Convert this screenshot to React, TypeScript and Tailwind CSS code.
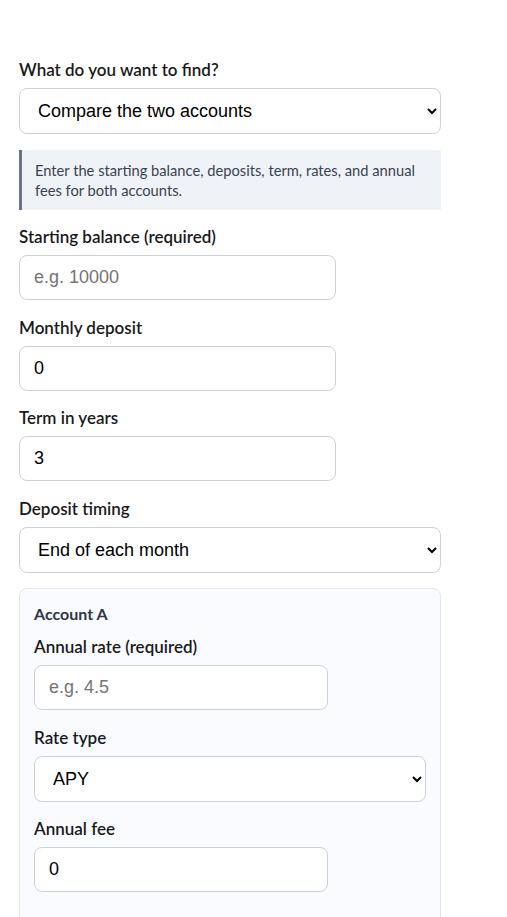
import React from "react";

const labelCls =
  "block text-[17px] leading-6 font-semibold text-[#1a1a1a] mb-1.5";
const inputCls =
  "block w-3/4 h-[45px] px-3.5 rounded-lg border border-[#cbd2da] bg-white text-[18px] text-black placeholder:text-[#757575] outline-none font-['Liberation_Sans',Arial,sans-serif]";
const selectCls =
  "block w-full h-[46px] px-3.5 rounded-lg border border-[#cbd2da] bg-white text-[18px] text-black outline-none font-['Liberation_Sans',Arial,sans-serif]";

function Field({
  label,
  children,
}: {
  label: string;
  children: React.ReactNode;
}) {
  return (
    <div>
      <label className={labelCls}>{label}</label>
      {children}
    </div>
  );
}

function AccountCard({ name }: { name: string }) {
  return (
    <div className="rounded-lg border border-[#e3e8ef] bg-[#f9fbfe] px-3.5 pt-[15px] pb-8 flex flex-col">
      <div className="text-[16px] leading-5 font-bold text-[#2d3748] mb-[11px]">
        {name}
      </div>
      <div className="flex flex-col gap-[15.5px]">
        <Field label="Annual rate (required)">
          <input className={inputCls} placeholder="e.g. 4.5" />
        </Field>
        <Field label="Rate type">
          <select className={selectCls} defaultValue="APY">
            <option value="APY">APY</option>
            <option value="APR">APR</option>
          </select>
        </Field>
        <Field label="Annual fee">
          <input className={inputCls} defaultValue="0" />
        </Field>
      </div>
    </div>
  );
}

export default function App() {
  return (
    <div className="min-h-screen bg-white pt-[58px] px-[19px] pb-10 font-['Lato','Noto_Sans',sans-serif]">
      <div className="w-[422px] flex flex-col">
        <Field label="What do you want to find?">
          <select className={selectCls} defaultValue="compare">
            <option value="compare">Compare the two accounts</option>
            <option value="a">Account A only</option>
          </select>
        </Field>

        <div className="mt-4 border-l-[3px] border-[#697386] bg-[#eff3f8] pl-[13px] pr-3 py-2.5 text-[14.7px] leading-5 text-[#3a4250]">
          Enter the starting balance, deposits, term, rates, and annual fees
          for both accounts.
        </div>

        <div className="mt-[15px] flex flex-col gap-[15.7px]">
          <Field label="Starting balance (required)">
            <input className={inputCls} placeholder="e.g. 10000" />
          </Field>
          <Field label="Monthly deposit">
            <input className={inputCls} defaultValue="0" />
          </Field>
          <Field label="Term in years">
            <input className={inputCls} defaultValue="3" />
          </Field>
          <Field label="Deposit timing">
            <select className={selectCls} defaultValue="end">
              <option value="end">End of each month</option>
              <option value="start">Start of each month</option>
            </select>
          </Field>
        </div>

        <div className="mt-[15px] flex flex-col gap-4">
          <AccountCard name="Account A" />
          <AccountCard name="Account B" />
        </div>
      </div>
    </div>
  );
}
